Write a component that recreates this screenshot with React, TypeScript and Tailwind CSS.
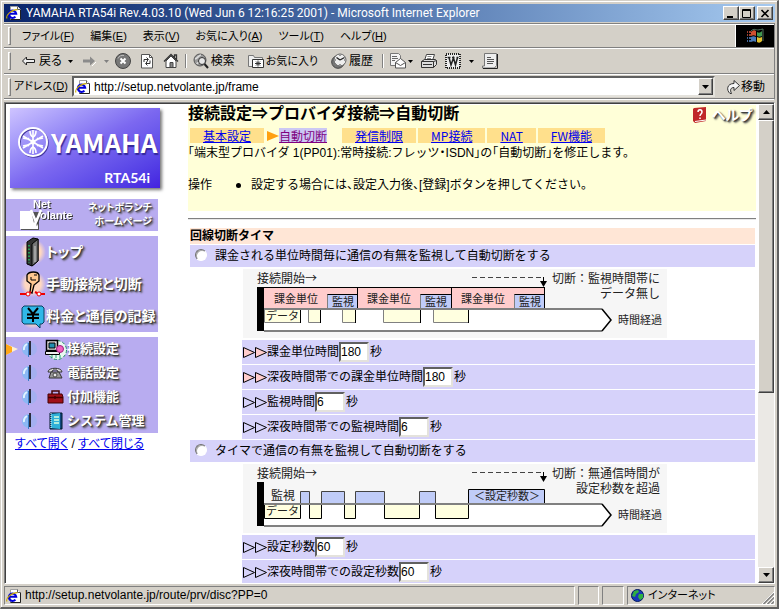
import React from "react";

type Kids = { children?: React.ReactNode };

const sunken = "border border-t-[#808080] border-l-[#808080] border-b-white border-r-white";
const raised = "border border-t-white border-l-white border-b-[#404040] border-r-[#404040] shadow-[inset_-1px_-1px_0_#808080]";
const well = "border-2 border-t-[#606060] border-l-[#606060] border-b-[#e4e2dc] border-r-[#e4e2dc] bg-white";

function IEIcon() {
  return (
    <svg width="16" height="16" viewBox="0 0 16 16" className="shrink-0" aria-hidden="true">
      <path d="M4.500 1.500h7l3 3v10h-10z" fill="#fff" stroke="#a0a0a0" />
      <path d="M14.500 4.500v10h-10" fill="none" stroke="#202020" />
      <path d="M11.500 1.500v3h3" fill="#fff" stroke="#606060" />
      <path d="M2.600 8.800h7.600A3.700 3.700 0 1 0 9.400 11.600" fill="none" stroke="#0000d8" strokeWidth="2.100" />
      <path d="M1 13.500C-.4 10.800 4.500 4.800 11.500 4.600" fill="none" stroke="#c8a800" strokeWidth="1.100" />
    </svg>
  );
}

function Caret() {
  return (
    <svg width="5" height="3" viewBox="0 0 5 3" className="shrink-0" aria-hidden="true">
      <path d="M0 0h5L2.500 3z" fill="currentColor" />
    </svg>
  );
}

function ScrollArrow({ up }: { up?: boolean }) {
  return (
    <svg width="7" height="4" viewBox="0 0 7 4" aria-hidden="true">
      <path d={up ? "M0 4h7L3.500 0z" : "M0 0h7L3.500 4z"} fill="#000" />
    </svg>
  );
}

function Grip() {
  return <span className="h-[18px] w-[3px] shrink-0 border border-t-white border-l-white border-b-[#808080] border-r-[#808080]" />;
}

function Divider() {
  return <span className="h-5 w-[2px] shrink-0 border-l border-r border-l-[#808080] border-r-white" />;
}

function WinButton({ label, children }: Kids & { label: string }) {
  return (
    <button aria-label={label} className={`flex h-[14px] w-4 items-center justify-center bg-[#d4d0c8] ${raised}`}>
      <svg width="10" height="9" viewBox="0 0 10 9" aria-hidden="true">{children}</svg>
    </button>
  );
}

function TitleBar() {
  return (
    <header className="flex h-[18px] items-center bg-linear-to-r from-[#0a246a] to-[#a6caf0] pl-[2px] pr-[2px] text-white">
      <IEIcon />
      <h1 className="ml-1 flex-1 truncate font-[Roboto,sans-serif] text-[12px] leading-[18px]">
        YAMAHA RTA54i Rev.4.03.10 (Wed Jun 6 12:16:25 2001) - Microsoft Internet Explorer
      </h1>
      <WinButton label="最小化"><path d="M1 7h6v2H1z" fill="#000" /></WinButton>
      <WinButton label="最大化"><path d="M.5.5h8v8h-8zM0 1.500h9" fill="none" stroke="#000" /></WinButton>
      <span className="w-[2px]" />
      <WinButton label="閉じる"><path d="M1.500 1l7 7M8.500 1l-7 7" stroke="#000" strokeWidth="1.600" /></WinButton>
    </header>
  );
}

const menus = [
  ["ファイル", "F"], ["編集", "E"], ["表示", "V"], ["お気に入り", "A"], ["ツール", "T"], ["ヘルプ", "H"],
];

function MenuBar() {
  return (
    <div className="flex h-6 items-stretch border-t border-b border-t-white border-b-[#808080]">
      <div className="flex flex-1 items-center pl-1">
        <Grip />
        <nav className="ml-[11px] flex gap-4 text-[11px] [font-feature-settings:'palt']">
          {menus.map(([name, key]) => (
            <button key={key} className="whitespace-nowrap">{name}(<u>{key}</u>)</button>
          ))}
        </nav>
      </div>
      <div className="flex w-[39px] items-center justify-center border-l border-white bg-black">
        <svg width="20" height="17" viewBox="0 0 20 17" aria-hidden="true">
          <path d="M6 4c2-2 4-2 5-1v5c-2-1-3-1-5 0z" fill="#d05030" />
          <path d="M12 4c2 1 3 1 5-1v5c-2 1-3 1-5 0z" fill="#409850" />
          <path d="M6 9c2-1 3-1 5 0v5c-2-1-3-1-5 0z" fill="#4878b8" />
          <path d="M12 9c2 1 3 1 5 0v4c-2 2-3 2-5 1z" fill="#e0c030" />
          <path d="M2 4h1m1 0h2M2 7h1m1 0h2" stroke="#a04030" strokeWidth="2" />
          <path d="M2 10h1m1 0h2M2 13h1m1 0h2" stroke="#40689c" strokeWidth="2" />
          <path d="M6 3c3-3 5-1 7-1s3-1 5-1v12" fill="none" stroke="#50705c" />
        </svg>
      </div>
    </div>
  );
}

function ToolButton({ icon, label, children }: { icon: React.ReactNode; label: string; children?: React.ReactNode }) {
  return (
    <button aria-label={label} className="flex items-center gap-[2px] whitespace-nowrap">
      <svg width="16" height="16" viewBox="0 0 16 16" className="shrink-0" aria-hidden="true">{icon}</svg>
      {children}
    </button>
  );
}

function ToolBar() {
  return (
    <div className="flex h-[26px] items-center border-t border-b border-t-white border-b-[#808080] pl-1 text-[12px]">
      <Grip />
      <div className="ml-[10px] flex items-center gap-2">
        <ToolButton label="戻る" icon={<path d="M1.500 8l4-4v2.500h8v3h-8V12z" fill="#eee" stroke="#222" />}>
          <span className="[font-feature-settings:'palt']">戻る</span>
          <span className="ml-1"><Caret /></span>
        </ToolButton>
        <div className="flex items-center gap-[7px] text-[#808080]">
          <ToolButton label="進む" icon={<><path d="M15 9l-4 4" stroke="#fff" /><path d="M2 6.500h7V3.500L14 8l-5 4.500v-3H2z" fill="#8b8b8b" /></>} />
          <Caret />
        </div>
      </div>
      <div className="ml-[6px] flex items-center gap-2">
        <ToolButton label="中止" icon={<><circle cx="8" cy="8" r="7.500" fill="#777" stroke="#444" /><path d="M3 5.500A5.500 5.500 0 0 1 9 2.500" stroke="#bbb" fill="none" /><path d="M5.500 5.500l5 5M10.500 5.500l-5 5" stroke="#fff" strokeWidth="2" /></>} />
        <ToolButton label="更新" icon={<><path d="M2.500 1.500h8l3 3v10.500h-11z" fill="#fff" stroke="#555" /><path d="M10.500 1.500v3h3" fill="none" stroke="#555" /><path d="M5 9V6.500h4M7.500 4.500l2 2-2 2M11 7.500V10.500H7M8.500 8.500l-2 2 2 2" fill="none" stroke="#333" /></>} />
        <ToolButton label="ホーム" icon={<><path d="M3 8v6.500h10V8L8 3z" fill="#fff" stroke="#444" /><path d="M1 8.500l7-7 7 7M11.500 5V2h2v5" fill="none" stroke="#333" strokeWidth="1.300" /><path d="M7 9.500h3v5H7z" fill="#888" stroke="#444" /></>} />
      </div>
      <span className="ml-[6px]"><Divider /></span>
      <div className="ml-[6px] flex items-center gap-[13px]">
        <ToolButton label="検索" icon={<><circle cx="7" cy="7" r="6" fill="#999" stroke="#555" /><path d="M2 6c3-1 4-4 6-4M4 11c0-3 6-1 8-4" stroke="#ddd" fill="none" strokeWidth="1.500" /><circle cx="9" cy="8" r="3.500" fill="#e6e6e6" stroke="#333" /><path d="M11.500 11l3.500 4" stroke="#222" strokeWidth="2" /></>}>
          <span>検索</span>
        </ToolButton>
        <ToolButton label="お気に入り" icon={<><path d="M.5 13.500v-11h5l1 2h8v9z" fill="#eee" stroke="#777" /><path d="M4.500 6.500h11v8h-11z" fill="#fff" stroke="#333" /><path d="M10 7.500v6M7 10.500h6M8 8.500l4 4M12 8.500l-4 4" stroke="#333" /></>}>
          <span className="text-[11px] [font-feature-settings:'palt']">お気に入り</span>
        </ToolButton>
        <ToolButton label="履歴" icon={<><circle cx="7" cy="9" r="6.300" fill="#777" stroke="#444" /><circle cx="9" cy="7" r="6" fill="#eee" stroke="#666" /><path d="M9 7L5.500 4.500M9 7l4.500-2.500" stroke="#222" strokeWidth="1.400" /><path d="M9 2v1M9 11v1M4 7h1M13 7h1" stroke="#444" /></>}>
          <span>履歴</span>
        </ToolButton>
      </div>
      <span className="ml-[9px]"><Divider /></span>
      <div className="ml-[6px] flex items-center gap-2">
        <ToolButton label="メール" icon={<><path d="M.5.500h8l2 2v10H.5z" fill="#f4f4f4" stroke="#777" /><path d="M2 3.500h5M2 5.500h6M2 7.500h3" stroke="#666" /><path d="M5.500 9.500l5-4 5 4v5.500h-10z" fill="#fff" stroke="#555" /><path d="M5.500 9.500l5 3 5-3" fill="none" stroke="#555" /></>}><Caret /></ToolButton>
        <ToolButton label="印刷" icon={<><path d="M5.500 1.500h8l-2 6h-8z" fill="#fff" stroke="#444" /><path d="M6.500 3.500h4M6 5.500h4" stroke="#888" /><path d="M.5 8.500l3-2h11l1 1v4l-3 3h-12z" fill="#ddd" stroke="#333" /><path d="M.5 8.500h12v6M12.500 8.500l3-1M2 11.500h9" fill="none" stroke="#333" /></>} />
        <ToolButton label="編集" icon={<><rect x="1" y="1" width="14" height="14" fill="#eee" stroke="#222" strokeWidth="2" strokeDasharray="1 1" /><path d="M2.500 4.500h3M7 4.500h2.500M11.500 4.500h2M4 4.500L6 12l2.500-7L10.500 12l2-7.500" fill="none" stroke="#222" strokeWidth="1.500" /></>}>
          <span className="ml-[6px]"><Caret /></span>
        </ToolButton>
        <ToolButton label="ディスカッション" icon={<><path d="M2.500.500h12v12l-2 2.500H.5v-2h2z" fill="#eee" stroke="#777" /><path d="M15.500 1v14.500H1" fill="none" stroke="#222" /><path d="M5 4.500h4M5 6.500h7M5 8.500h7M5 10.500h6" stroke="#555" /></>} />
      </div>
    </div>
  );
}

function AddressBar() {
  return (
    <div className="flex h-[25px] items-center border-t border-b border-t-white border-b-[#808080] pl-1 text-[12px]">
      <Grip />
      <label htmlFor="address" className="ml-[3px] w-[58px] text-[11px] whitespace-nowrap [font-feature-settings:'palt']">アドレス(<u>D</u>)</label>
      <div className={`flex h-[21px] flex-1 items-center pl-[1px] ${well}`}>
        <IEIcon />
        <input id="address" defaultValue="http://setup.netvolante.jp/frame" className="ml-[3px] min-w-0 flex-1 bg-transparent text-[12px] leading-4 outline-none" />
        <button aria-label="アドレスの一覧" className={`flex h-[17px] w-[15px] items-center justify-center bg-[#d4d0c8] ${raised}`}><ScrollArrow /></button>
      </div>
      <button className="ml-[11px] flex items-center pr-[9px] whitespace-nowrap">
        <svg width="15" height="16" viewBox="0 0 15 16" aria-hidden="true">
          <path d="M4 14.500C0 11 1 4.500 8 4.500v-3l5.500 5-5.500 5v-3C5 8.500 3.500 10.500 5.500 14.500z" fill="#f6f6f6" stroke="#333" />
        </svg>
        移動
      </button>
    </div>
  );
}

const glow = "font-bold text-white [text-shadow:1px_1px_1px_#333,2px_2px_2px_#555]";

function NavItem({ icon, children }: Kids & { icon: React.ReactNode }) {
  return (
    <a href="#nav" className={`flex h-8 items-center pl-[14px] text-[14px] leading-5 [font-feature-settings:'palt'] ${glow}`}>
      <svg width="26" height="32" viewBox="0 0 26 32" className="shrink-0" aria-hidden="true">
        <defs>
          <radialGradient id="halo">
            <stop offset="0.6" stopColor="#ffd8c0" />
            <stop offset="1" stopColor="#ffd8c0" stopOpacity="0" />
          </radialGradient>
        </defs>
        <circle cx="13" cy="16" r="13" fill="url(#halo)" />
        {icon}
      </svg>
      <span className="whitespace-nowrap">{children}</span>
    </a>
  );
}

function SubItem({ icon, current, children }: Kids & { icon: React.ReactNode; current?: boolean }) {
  return (
    <a href="#sub" className={`flex h-6 items-center text-[13px] ${glow}`}>
      <svg width="38" height="24" viewBox="0 0 38 24" className="shrink-0" aria-hidden="true">
        {current && <><path d="M0 7l12 5-12 6z" fill="#fff0d0" /><path d="M0 7l6 3v5l-6 3z" fill="#ffa818" /></>}
        <path d="M23 5a7 7 0 0 0 0 14z" fill="#8cb8f4" />
        <path d="M24 5a7 7 0 0 1 0 14z" fill="#a4b0f0" />
        <path d="M21 7a6 6 0 0 0-3 6" fill="none" stroke="#e0f2ff" strokeWidth="2" />
        <path d="M22.500 6v14" stroke="#3c80c8" />
        <path d="M24 4v14" stroke="#000" strokeWidth="1.500" />
      </svg>
      <svg width="22" height="24" viewBox="0 0 22 24" className="shrink-0 overflow-visible" aria-hidden="true">{icon}</svg>
      <span className="ml-[1px] whitespace-nowrap">{children}</span>
    </a>
  );
}

function Sidebar() {
  return (
    <aside className="w-[182px] shrink-0 pt-1 text-[12px]">
      <div className="ml-1 h-20 w-[150px] bg-linear-to-br from-[#cfc4ff] via-[#7c68f0] to-[#4420e0] text-white shadow-[2px_2px_3px_#777]">
        <div className="flex h-[60px] items-center gap-[2px] pt-2 pl-2">
          <svg width="31" height="32" viewBox="0 0 31 32" className="shrink-0" aria-hidden="true">
            <circle cx="16" cy="17" r="14" fill="none" stroke="#43369c" strokeWidth="1.500" />
            <circle cx="15" cy="16" r="14" fill="none" stroke="#fff" strokeWidth="2" />
            <g stroke="#fff" strokeWidth="1.600" fill="none">
              <path d="M15 4v24M5 10l20 12M25 10L5 22" />
              <path d="M12 5c0 4 1 5 3 6 2-1 3-2 3-6M12 27c0-4 1-5 3-6 2 1 3 2 3 6M5 12c3 1 5 1 6 0M5 20c3-1 5-1 6 0M25 12c-3 1-5 1-6 0M25 20c-3-1-5-1-6 0" />
            </g>
            <circle cx="15" cy="16" r="2.500" fill="#fff" />
          </svg>
          <span className="font-['Noto_Sans_CJK_JP',sans-serif] text-[26px] leading-7 font-bold [text-shadow:1px_2px_1px_#33289a]">YAMAHA</span>
        </div>
        <div className="pr-[10px] text-right font-[Lato,sans-serif] text-[14px] leading-5 font-bold">RTA54i</div>
      </div>
      <a href="#home" className="mt-[11px] flex h-8 w-[152px] items-center justify-between bg-[#b8acf0] pl-[14px]">
        <svg width="60" height="32" viewBox="0 0 60 32" className="shrink-0" aria-hidden="true">
          <path d="M1 13h18v18H1z" fill="#555" />
          <path d="M0 12h11l3 12 2-5h2v11H0z" fill="#fff" />
          <path d="M13 13l4 12 5-12" fill="none" stroke="#444" strokeWidth="1.500" />
          <path d="M11 11l5 12 5-12" fill="none" stroke="#fff" strokeWidth="2.500" />
          <g className="[filter:drop-shadow(1px_1px_0_#333)]" fontFamily="Liberation Sans, sans-serif" fontWeight="bold" fontSize="11" fill="#fff">
            <text x="13" y="9">Net</text>
            <text x="20" y="20">olante</text>
          </g>
        </svg>
        <span className={`pr-[6px] text-right text-[10px] leading-[14px] whitespace-nowrap ${glow} [font-feature-settings:'palt']`}>ネットボランチ<br />ホームページ</span>
      </a>
      <nav className="mt-[5px] w-[152px] bg-[#b8acf0]">
        <NavItem icon={<><path d="M7 6l6-4 5 1v22l-6 5-5-2z" fill="#333" stroke="#000" /><path d="M12 8l6-5v22l-6 5z" fill="#777" stroke="#000" /><path d="M15 10v16" stroke="#ccc" /><path d="M9 9v18" stroke="#20c060" strokeWidth="1.500" strokeDasharray="1.500 2" /></>}>トップ</NavItem>
        <NavItem icon={<><path d="M7 7c2-4 11-4 12 0v6l-5 4-2 8-2-1 1-8-4-3z" fill="#ffc890" stroke="#000" strokeWidth="1.300" /><path d="M11 9v3h5M14 7h3" stroke="#000" fill="none" /><path d="M0 26h7l4-2M25 26h-6l-4-2" stroke="#f00000" strokeWidth="2" fill="none" /><circle cx="8" cy="26" r="2" fill="#fff" stroke="#f00000" /><circle cx="19" cy="26" r="2" fill="#fff" stroke="#f00000" /></>}>手動接続と切断</NavItem>
        <NavItem icon={<><path d="M4 6h18l2 2v14l-2 2h-2v4l-4-4H4l-2-2V8z" fill="#30b8e8" stroke="#063e60" /><path d="M8 8l5 6 5-6M7 14.500h12M7 18h12M13 14v8" fill="none" stroke="#000" strokeWidth="2" /></>}>料金と通信の記録</NavItem>
      </nav>
      <nav className="mt-[5px] w-[152px] bg-[#b8acf0]">
        <SubItem current icon={<><circle cx="13" cy="13" r="9.500" fill="#e8f8f0" stroke="#209060" strokeDasharray="3 2" /><path d="M2.500 3.500h11v10h-11z" fill="#ddd" stroke="#000" strokeWidth="1.500" /><path d="M5 6h6v5H5z" fill="#2090b0" stroke="#000" /><path d="M1.500 14.500h14v3h-14z" fill="#eee" stroke="#000" /><circle cx="16" cy="12" r="3.500" fill="#f060c0" stroke="#a02080" /><path d="M12 18v3M16 18v3M8 18v3" stroke="#20a070" /></>}>接続設定</SubItem>
        <SubItem icon={<><path d="M4 11c0-5 14-5 14 0h-4l-1-2H9l-1 2z" fill="#ddd" stroke="#333" /><path d="M5 17l2-6h8l3 6z" fill="#999" stroke="#333" /><circle cx="11" cy="14" r="2" fill="#eee" stroke="#444" /></>}>電話設定</SubItem>
        <SubItem icon={<><path d="M8 9V6h7v3" fill="none" stroke="#400" strokeWidth="1.500" /><path d="M4 9h14l1 3v6H4z" fill="#a01018" stroke="#400" /><path d="M4 12.500h15M11 11v3" stroke="#400" strokeWidth="1.500" /></>}>付加機能</SubItem>
        <SubItem icon={<><path d="M6 4h12v16H6z" fill="#114a80" stroke="#001828" /><path d="M7 5l9-1v16l-9-1z" fill="#30b0d8" /><path d="M10 8h5M10 11h5M10 14h5" stroke="#d8ffe0" strokeWidth="1.500" /><path d="M7 4v16" stroke="#fff" strokeDasharray="1 1" /></>}>システム管理</SubItem>
      </nav>
      <p className="mt-[2px] pl-[9px] leading-[18px] text-black [font-feature-settings:'palt']">
        <a href="#open" className="text-[#0000ee] underline">すべて開く</a> / <a href="#close" className="text-[#0000ee] underline">すべて閉じる</a>
      </p>
    </aside>
  );
}

const tabs = ["基本設定", "自動切断", "発信制限", "MP接続", "NAT", "FW機能"];

function PageHeader() {
  return (
    <section className="h-[106px] bg-[#ffffd8]">
      <div className="flex h-[22px] items-start">
        <h2 className="flex-1 text-[16px] leading-[18px] font-bold whitespace-nowrap">接続設定⇒プロバイダ接続⇒自動切断</h2>
        <a href="#help" className="flex items-center gap-1 pr-1 text-[14px] leading-5">
          <svg width="16" height="18" viewBox="0 0 16 18" aria-hidden="true">
            <path d="M2 2l12-1v14L3 17l-2-2V3z" fill="#c02828" />
            <path d="M3 15.500l11-1.500" stroke="#fff" />
            <path d="M6 6c0-3 4-3 4 0 0 2-2 2-2 4M8 11.500v1.500" fill="none" stroke="#fff" strokeWidth="1.500" />
          </svg>
          <span className={`[font-feature-settings:'palt'] ${glow}`}>ヘルプ</span>
        </a>
      </div>
      <nav className="flex gap-[2px] pt-[1px] pl-[2px] font-['Noto_Sans_CJK_JP',sans-serif] text-[12px] leading-[15px] whitespace-nowrap">
        {tabs.map((t) =>
          t === "自動切断" ? (
            <a key={t} href="#tab" aria-current="page" className="flex items-center pr-[13px] pl-[1px] text-[#800080] underline">
              <svg width="12" height="12" viewBox="0 0 12 12" aria-hidden="true"><path d="M0 1l12 5-12 5z" fill="#ffa010" /></svg>
              <span className="bg-[#ccc8f4]">{t}</span>
            </a>
          ) : (
            <a key={t} href="#tab" className="bg-[#ffe08c] px-[13px] text-[#0000ee] underline">{t}</a>
          )
        )}
      </nav>
      <p className="text-[12px] leading-5 whitespace-nowrap [font-feature-settings:'halt']">「端末型プロバイダ 1(PP01):常時接続:フレッツ・ISDN」の「自動切断」を修正します。</p>
      <dl className="mt-[13px] flex text-[12px] leading-[18px] whitespace-nowrap [font-feature-settings:'halt']">
        <dt className="w-12">操作</dt>
        <dd>
          <ul>
            <li className="flex items-center gap-[10px]">
              <span className="h-[5px] w-[5px] rounded-full bg-black" />
              設定する場合には、設定入力後、[登録]ボタンを押してください。
            </li>
          </ul>
        </dd>
      </dl>
    </section>
  );
}

const ink = "#000";
const line = "#808080";
const pale = "#ffffe0";
const blue = "#c0ccf8";

function Timeline({ children, reason }: Kids & { reason: [string, string] }) {
  return (
    <div className="py-px pl-[53px]">
      <svg width="424" height="69" viewBox="0 0 424 69" className="block bg-[#f6f6f6]" fontFamily="Noto Sans CJK JP, sans-serif" fontSize="11" fill="#222" role="img" aria-label={reason.join("")}>
        <text x="14" y="14" fontSize="12">接続開始→</text>
        <path d="M21 40H359L368 51 359 62H21z" fill="#fff" />
        {children}
        <path d="M21 40H359M359 62H21" stroke={line} strokeWidth="2" />
        <path d="M359 40l9 11-9 11" fill="none" stroke={ink} strokeWidth="1.500" />
        <path d="M14 18h7v44h-7z" fill={ink} />
        <path d="M229 8.500H300" stroke="#444" strokeDasharray="5 3" />
        <path d="M300.500 8v8" stroke={ink} />
        <path d="M297 12h7l-3.500 6z" fill={ink} />
        <g textAnchor="end" fontSize="12">
          <text x="417" y="14">{reason[0]}</text>
          <text x="417" y="29">{reason[1]}</text>
        </g>
        <text x="375" y="55">時間経過</text>
        <text x="23" y="51">データ</text>
      </svg>
    </div>
  );
}

function UnitTimeline() {
  return (
    <Timeline reason={["切断：監視時間帯に", "データ無し"]}>
      <path d="M21 18.500H301V40H21z" fill="#ffcccc" />
      {[[84, 114], [177, 208], [271, 301]].map(([a, b]) => (
        <g key={a}>
          <path d={`M${a}.500 25.500H${b}.500V40H${a}.500z`} fill={blue} stroke={line} />
          <path d={`M${a}.500 25.500H${b}.500M${b}.500 18V40`} stroke={ink} />
          <text x={a - 53} y="34">課金単位</text>
          <text x={a + 5} y="37">監視</text>
        </g>
      ))}
      <path d="M21 18.500H301" stroke={ink} />
      {[[21, 57], [65, 77], [99, 112], [140, 177], [190, 225]].map(([a, b]) => (
        <g key={a}>
          <path d={`M${a}.500 40H${b}.500V53.500H${a}.500z`} fill={pale} stroke={line} />
          <path d={`M${b}.500 41V54`} stroke={ink} />
        </g>
      ))}
    </Timeline>
  );
}

function IdleTimeline() {
  return (
    <Timeline reason={["切断：無通信時間が", "設定秒数を超過"]}>
      {[[57, 66], [78, 101], [112, 141], [176, 192]].map(([a, b]) => (
        <path key={a} d={`M${a}.500 27.500H${b}.500V40H${a}.500z`} fill={blue} stroke="#444" />
      ))}
      <path d="M225.500 25.500H301.500V40H225.500z" fill={blue} stroke={ink} />
      {[[21, 57], [66, 78], [101, 112], [141, 176], [192, 225]].map(([a, b]) => (
        <path key={a} d={`M${a}.500 40H${b}.500V54.500H${a}.500z`} fill={pale} stroke={ink} />
      ))}
      <text x="28" y="36" fontSize="12">監視</text>
      <text x="231" y="36">＜設定秒数＞</text>
    </Timeline>
  );
}

function Choice({ id, children }: Kids & { id: string }) {
  return (
    <div className="flex h-[22px] items-center bg-[#d6d2fa] pl-1 text-[12px]">
      <input type="radio" name="timer" id={id} className="mr-2 mb-[2px] ml-[1px] h-3 w-3 appearance-none rounded-full border border-t-[#707070] border-l-[#707070] border-b-white border-r-white bg-white shadow-[inset_1px_1px_0_#aaa]" />
      <label htmlFor={id}>{children}</label>
    </div>
  );
}

function Seconds({ id, label, value, pink }: { id: string; label: string; value: string; pink?: boolean }) {
  const fill = pink ? "#ffcccc" : "none";
  return (
    <div className="ml-[52px] flex h-6 items-center bg-[#d6d2fa] pl-[1px] text-[12px]">
      <svg width="24" height="13" viewBox="0 0 24 13" aria-hidden="true">
        <path d="M.5 1.500l11 5-11 5zM12.500 1.500l11 5-11 5z" fill={fill} stroke="#000" />
      </svg>
      <label htmlFor={id}>{label}</label>
      <input id={id} defaultValue={value} className={`h-5 w-[30px] text-[12px] leading-4 outline-none ${well}`} />
      <span className="ml-[1px]">秒</span>
    </div>
  );
}

function MainPane() {
  return (
    <main className="min-w-0 flex-1 overflow-hidden pt-px pr-[2px]">
      <PageHeader />
      <hr className="mt-[7px] h-[2px] border-t border-b border-t-[#808080] border-b-[#e8e8e8]" />
      <form className="mt-2 mr-[1px] ml-[2px] flex flex-col gap-px">
        <h3 className="h-4 bg-[#ffe6d6] text-[12px] leading-4 font-bold">回線切断タイマ</h3>
        <Choice id="unit">課金される単位時間毎に通信の有無を監視して自動切断をする</Choice>
        <UnitTimeline />
        <Seconds id="s1" pink label="課金単位時間" value="180" />
        <Seconds id="s2" pink label="深夜時間帯での課金単位時間" value="180" />
        <Seconds id="s3" label="監視時間" value="6" />
        <Seconds id="s4" label="深夜時間帯での監視時間" value="6" />
        <Choice id="idle">タイマで通信の有無を監視して自動切断をする</Choice>
        <IdleTimeline />
        <Seconds id="s5" label="設定秒数" value="60" />
        <Seconds id="s6" label="深夜時間帯での設定秒数" value="60" />
      </form>
    </main>
  );
}

function ScrollBar() {
  const button = `flex h-4 w-4 shrink-0 items-center justify-center bg-[#d4d0c8] ${raised}`;
  return (
    <div className="flex w-4 shrink-0 flex-col bg-[#ebe9e5]">
      <button aria-label="上へ" className={button}><ScrollArrow up /></button>
      <div className={`h-[57%] bg-[#d4d0c8] ${raised}`} />
      <div className="flex-1" />
      <button aria-label="下へ" className={button}><ScrollArrow /></button>
    </div>
  );
}

function StatusBar() {
  return (
    <footer className="mt-[2px] flex h-[19px] gap-[3px] text-[12px] leading-[17px]">
      <div className={`flex flex-1 items-center gap-[3px] pl-[1px] ${sunken}`}><IEIcon />http://setup.netvolante.jp/route/prv/disc?PP=0</div>
      <div className={`w-[21px] ${sunken}`} />
      <div className={`w-[22px] ${sunken}`} />
      <div className={`flex w-[148px] items-center pl-[3px] ${sunken}`}>
        <svg width="13" height="13" viewBox="0 0 13 13" aria-hidden="true">
          <circle cx="6.500" cy="6.500" r="6" fill="#1838b8" stroke="#001860" />
          <path d="M3 2l4-1 1 2-3 2-1 3-3-1zM8 5l4 0v4l-3 2-2-3z" fill="#30b040" />
        </svg>
        <span className="ml-1 flex-1 text-[11px] [font-feature-settings:'palt']">インターネット</span>
        <svg width="12" height="12" viewBox="0 0 12 12" className="self-end" aria-hidden="true">
          <path d="M0 12L12 0M4 12l8-8M8 12l4-4" stroke="#fff" strokeWidth="1" />
          <path d="M1.500 12L12 1.500M5.500 12L12 5.500M9.500 12L12 9.500" stroke="#808080" strokeWidth="1.500" />
        </svg>
      </div>
    </footer>
  );
}

export default function App() {
  return (
    <div className="flex h-screen flex-col overflow-hidden border-t border-r-2 border-b-2 border-l border-t-[#d4d0c8] border-l-[#d4d0c8] border-r-[#606060] border-b-[#606060] bg-[#d4d0c8] font-['Liberation_Sans','Noto_Sans_CJK_JP',sans-serif] text-black">
      <div className="flex min-h-0 flex-1 flex-col border-t border-l border-white p-[2px]">
        <TitleBar />
        <div className="mt-[1px] border-t border-r border-t-[#808080] border-r-[#808080] border-b border-b-white">
          <MenuBar />
          <ToolBar />
          <AddressBar />
        </div>
        <div className="mt-[2px] flex min-h-0 flex-1 border border-t-[#808080] border-l-[#808080] border-r-white border-b-white">
          <div className="flex min-w-0 flex-1 overflow-hidden border-t border-l border-[#404040] bg-white">
            <Sidebar />
            <MainPane />
            <ScrollBar />
          </div>
        </div>
        <StatusBar />
      </div>
    </div>
  );
}
